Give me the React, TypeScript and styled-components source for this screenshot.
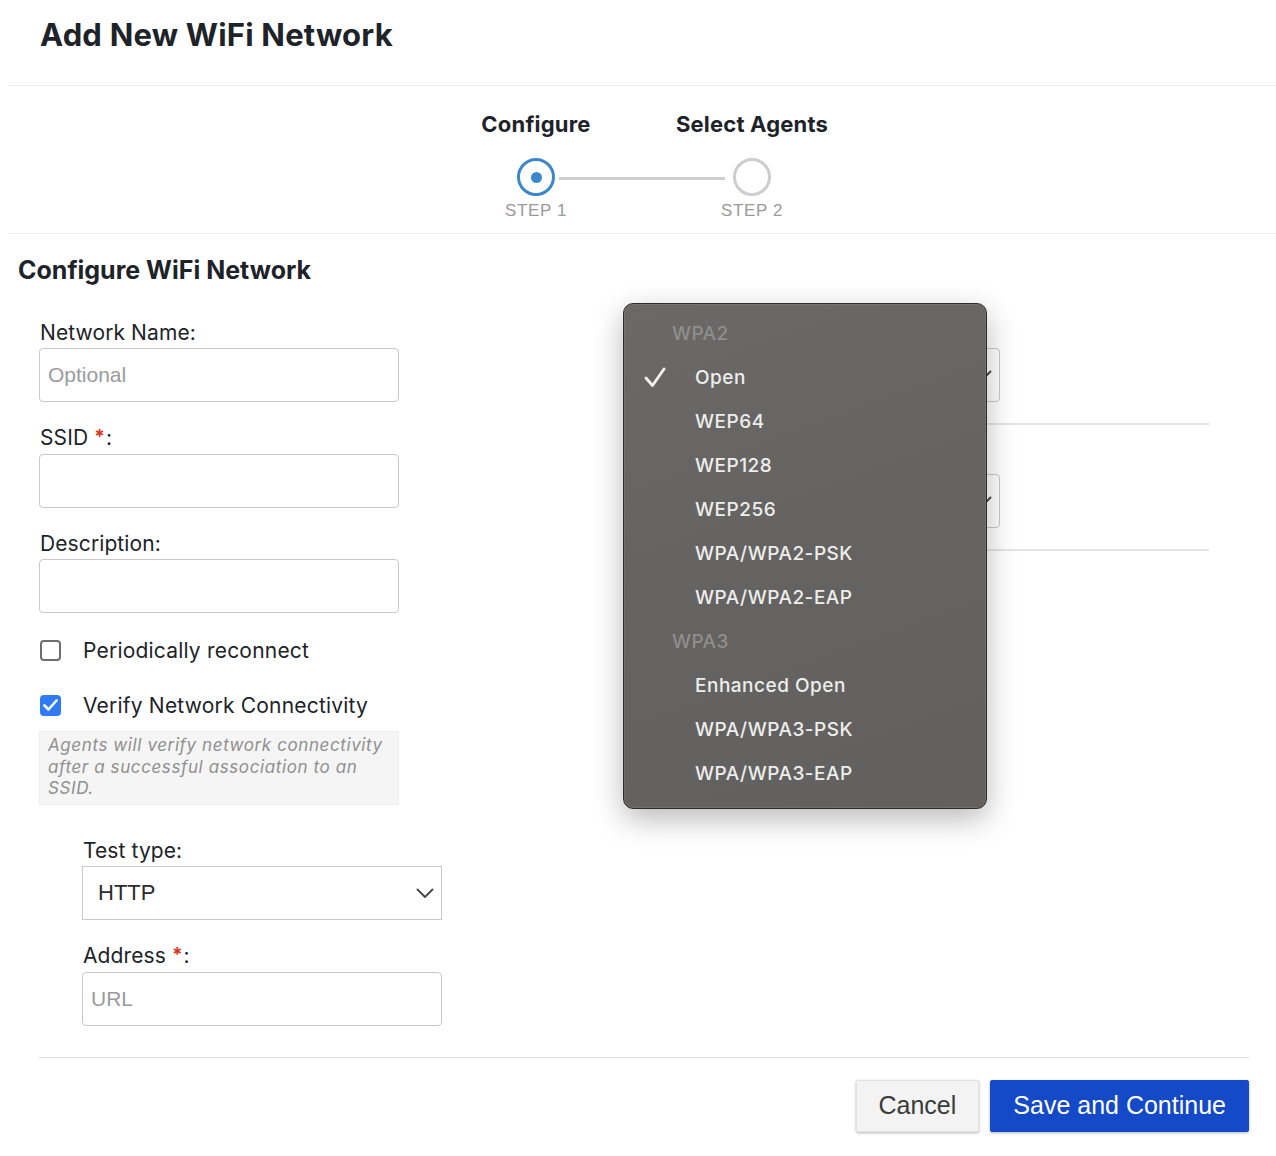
import styled, { createGlobalStyle } from "styled-components";

const GlobalStyle = createGlobalStyle`
  html, body {
    background: #ffffff;
  }
  body {
    margin: 8px 0 8px 8px;
    font-family: Inter, "Noto Sans", sans-serif;
    color: #1d2329;
  }
  * {
    box-sizing: border-box;
  }
`;

const Page = styled.div`
  position: relative;
  width: 1268px;
`;

const Header = styled.header`
  padding: 9px 32px 32px;
  border-bottom: 1px solid #ededed;
`;

const Title = styled.h1`
  margin: 0;
  font-size: 31px;
  line-height: 36px;
  font-weight: 700;
  letter-spacing: 0.2px;
`;

const StepperBar = styled.div`
  display: flex;
  justify-content: center;
  padding: 26px 0 12px 4px;
  border-bottom: 1px solid #ededed;
`;

const StepGrid = styled.div`
  display: grid;
  grid-template-columns: 216px 216px;
`;

const StepTitle = styled.div`
  text-align: center;
  font-size: 22px;
  line-height: 24px;
  font-weight: 700;
  letter-spacing: 0.2px;
`;

const Track = styled.div`
  grid-column: 1 / 3;
  display: flex;
  align-items: center;
  padding: 0 89px;
  margin-top: 22px;
`;

const Circle = styled.div<{ $active?: boolean }>`
  width: 38px;
  height: 38px;
  flex: none;
  border-radius: 50%;
  border: 3px solid ${(p) => (p.$active ? "#3a88cb" : "#cdcdcd")};
  display: flex;
  align-items: center;
  justify-content: center;
  background: #fff;
`;

const Dot = styled.div`
  width: 11px;
  height: 11px;
  border-radius: 50%;
  background: #3a88cb;
`;

const Connector = styled.div`
  flex: 1;
  height: 3px;
  margin: 3px 8px 0 4px;
  background: #cdcdcd;
`;

const StepLabel = styled.div`
  margin-top: 5px;
  text-align: center;
  font-family: "Liberation Sans", Arial, sans-serif;
  font-size: 17px;
  line-height: 20px;
  letter-spacing: 0.6px;
  color: #9a9a9a;
`;

const Section = styled.section`
  padding: 21px 27px 0 10px;
`;

const SectionTitle = styled.h2`
  margin: 0;
  font-size: 25px;
  line-height: 30px;
  font-weight: 700;
`;

const FormGrid = styled.div`
  display: grid;
  grid-template-columns: 601px 569px;
  align-items: start;
  padding-left: 21px;
  margin-top: 36px;
`;

const Column = styled.div`
  display: flex;
  flex-direction: column;
`;

const Field = styled.div<{ $gap?: number }>`
  display: flex;
  flex-direction: column;
  margin-bottom: ${(p) => p.$gap ?? 24}px;
`;

const Label = styled.label`
  font-size: 21px;
  line-height: 24px;
  letter-spacing: 0.1px;
  margin-bottom: 3px;
  padding-left: 1px;
  color: #1d2329;
`;

const Required = styled.span`
  color: #d7341c;
  font-weight: 700;
  font-size: 19px;
  margin: 0 1px 0 6px;
  position: relative;
  top: -2px;
`;

const TextInput = styled.input`
  width: 360px;
  height: 54px;
  border: 1px solid #c9c9c9;
  border-radius: 4px;
  padding: 0 8px;
  font-family: "Liberation Sans", Arial, sans-serif;
  font-size: 21px;
  color: #333;
  background: #fff;
  outline: none;

  &::placeholder {
    color: #9b9b9b;
  }
`;

const SelectBox = styled.div<{ $rounded?: boolean }>`
  width: 360px;
  height: 54px;
  border: 1px solid #c9c9c9;
  border-radius: ${(p) => (p.$rounded ? "4px" : "0")};
  display: flex;
  align-items: center;
  justify-content: space-between;
  padding: 0 7px 0 15px;
  font-family: "Liberation Sans", Arial, sans-serif;
  font-size: 22px;
  color: #2b2b2b;
  background: #fff;
`;

const CheckRow = styled.label<{ $top: number }>`
  display: flex;
  align-items: center;
  gap: 22px;
  height: 22px;
  margin-top: ${(p) => p.$top}px;
  font-size: 21px;
  letter-spacing: 0.2px;
  padding-left: 1px;
`;

const Box = styled.span<{ $checked?: boolean }>`
  width: 21px;
  height: 21px;
  flex: none;
  border-radius: 4px;
  border: ${(p) => (p.$checked ? "none" : "2px solid #6e6e6e")};
  background: ${(p) => (p.$checked ? "#2f7bf5" : "#fff")};
  display: flex;
  align-items: center;
  justify-content: center;
`;

const HelpBox = styled.div`
  width: 360px;
  margin-top: 15px;
  padding: 3px 8px 4px;
  background: #f5f5f5;
  border: 1px solid #efefef;
  font-size: 17px;
  line-height: 21.5px;
  font-style: italic;
  color: #8f8f8f;
  letter-spacing: 0.6px;
`;

const Nested = styled.div`
  padding-left: 43px;
  margin-top: 34px;
  display: flex;
  flex-direction: column;
`;

const RightField = styled.div`
  display: flex;
  flex-direction: column;
  padding-bottom: 21px;
  margin-bottom: 22px;
  border-bottom: 2px solid #e4e4e4;
`;

const Footer = styled.footer`
  margin: 31px 27px 0 31px;
  padding: 22px 0 24px;
  border-top: 1px solid #dcdcdc;
  display: flex;
  justify-content: flex-end;
  gap: 11px;
`;

const Button = styled.button<{ $primary?: boolean }>`
  height: 52px;
  padding: 0 22px;
  border-radius: 2px;
  font-family: "Liberation Sans", Arial, sans-serif;
  font-size: 25px;
  border: 1px solid ${(p) => (p.$primary ? "#1449c8" : "#e2e2e2")};
  background: ${(p) => (p.$primary ? "#1449c8" : "#f3f3f3")};
  color: ${(p) => (p.$primary ? "#ffffff" : "#3a3a3a")};
  box-shadow: 0 1px 3px rgba(0, 0, 0, 0.3);
`;

const Menu = styled.div`
  position: absolute;
  left: 615px;
  top: 295px;
  width: 364px;
  padding: 7px 0 13px;
  border-radius: 10px;
  border: 1px solid #2c2c2b;
  background: linear-gradient(160deg, #6a6967 0%, #646361 50%, #62615f 100%);
  box-shadow: inset 0 0 0 1px rgba(255, 255, 255, 0.08), 0 10px 30px rgba(0, 0, 0, 0.28);
`;

const MenuGroup = styled.div`
  height: 44px;
  display: flex;
  align-items: center;
  padding-left: 48px;
  font-size: 19px;
  font-weight: 500;
  letter-spacing: 0.4px;
  color: #8f8e8c;
`;

const MenuItem = styled.div`
  height: 44px;
  display: grid;
  grid-template-columns: 71px 1fr;
  align-items: center;
  font-size: 19px;
  font-weight: 500;
  letter-spacing: 0.5px;
  color: #eeeeed;
`;

const Tick = styled.span`
  display: flex;
  justify-content: flex-end;
  padding-right: 29px;
`;

const Chevron = () => (
  <svg width="18" height="10" viewBox="0 0 18 10" fill="none">
    <path d="M1.5 1.5l7.5 7.5 7.5-7.5" stroke="#444" strokeWidth="1.8" strokeLinecap="round" strokeLinejoin="round" />
  </svg>
);

const wpa2 = ["Open", "WEP64", "WEP128", "WEP256", "WPA/WPA2-PSK", "WPA/WPA2-EAP"];
const wpa3 = ["Enhanced Open", "WPA/WPA3-PSK", "WPA/WPA3-EAP"];

const Item = ({ label, selected }: { label: string; selected?: boolean }) => (
  <MenuItem>
    <Tick>
      {selected && (
        <svg width="22" height="20" viewBox="0 0 22 20" fill="none">
          <path d="M2 11l6.5 7.5L20 2" stroke="#f2f2f2" strokeWidth="2.8" strokeLinecap="round" strokeLinejoin="round" />
        </svg>
      )}
    </Tick>
    <span>{label}</span>
  </MenuItem>
);

export default function App() {
  return (
    <Page>
      <GlobalStyle />
      <Header>
        <Title>Add New WiFi Network</Title>
      </Header>

      <StepperBar>
        <StepGrid>
          <StepTitle>Configure</StepTitle>
          <StepTitle>Select Agents</StepTitle>
          <Track>
            <Circle $active>
              <Dot />
            </Circle>
            <Connector />
            <Circle />
          </Track>
          <StepLabel>STEP 1</StepLabel>
          <StepLabel>STEP 2</StepLabel>
        </StepGrid>
      </StepperBar>

      <Section>
        <SectionTitle>Configure WiFi Network</SectionTitle>
        <FormGrid>
          <Column>
            <Field>
              <Label>Network Name:</Label>
              <TextInput placeholder="Optional" />
            </Field>
            <Field>
              <Label>
                SSID<Required>*</Required>:
              </Label>
              <TextInput />
            </Field>
            <Field $gap={0}>
              <Label>Description:</Label>
              <TextInput />
            </Field>

            <CheckRow $top={26}>
              <Box />
              Periodically reconnect
            </CheckRow>
            <CheckRow $top={33}>
              <Box $checked>
                <svg width="15" height="12" viewBox="0 0 15 12" fill="none">
                  <path d="M1.5 6.5l4 4L13.5 1.5" stroke="#fff" strokeWidth="2.6" strokeLinecap="round" strokeLinejoin="round" />
                </svg>
              </Box>
              Verify Network Connectivity
            </CheckRow>
            <HelpBox>Agents will verify network connectivity after a successful association to an SSID.</HelpBox>

            <Nested>
              <Field>
                <Label>Test type:</Label>
                <SelectBox>
                  HTTP
                  <Chevron />
                </SelectBox>
              </Field>
              <Field $gap={0}>
                <Label>
                  Address<Required>*</Required>:
                </Label>
                <TextInput placeholder="URL" />
              </Field>
            </Nested>
          </Column>

          {/* selects hidden behind the open security menu */}
          <Column>
            <RightField>
              <Label>&nbsp;</Label>
              <SelectBox $rounded>
                <span />
                <Chevron />
              </SelectBox>
            </RightField>
            <RightField>
              <Label>&nbsp;</Label>
              <SelectBox $rounded>
                <span />
                <Chevron />
              </SelectBox>
            </RightField>
          </Column>
        </FormGrid>
      </Section>

      <Footer>
        <Button>Cancel</Button>
        <Button $primary>Save and Continue</Button>
      </Footer>

      <Menu>
        <MenuGroup>WPA2</MenuGroup>
        {wpa2.map((l) => (
          <Item key={l} label={l} selected={l === "Open"} />
        ))}
        <MenuGroup>WPA3</MenuGroup>
        {wpa3.map((l) => (
          <Item key={l} label={l} />
        ))}
      </Menu>
    </Page>
  );
}
